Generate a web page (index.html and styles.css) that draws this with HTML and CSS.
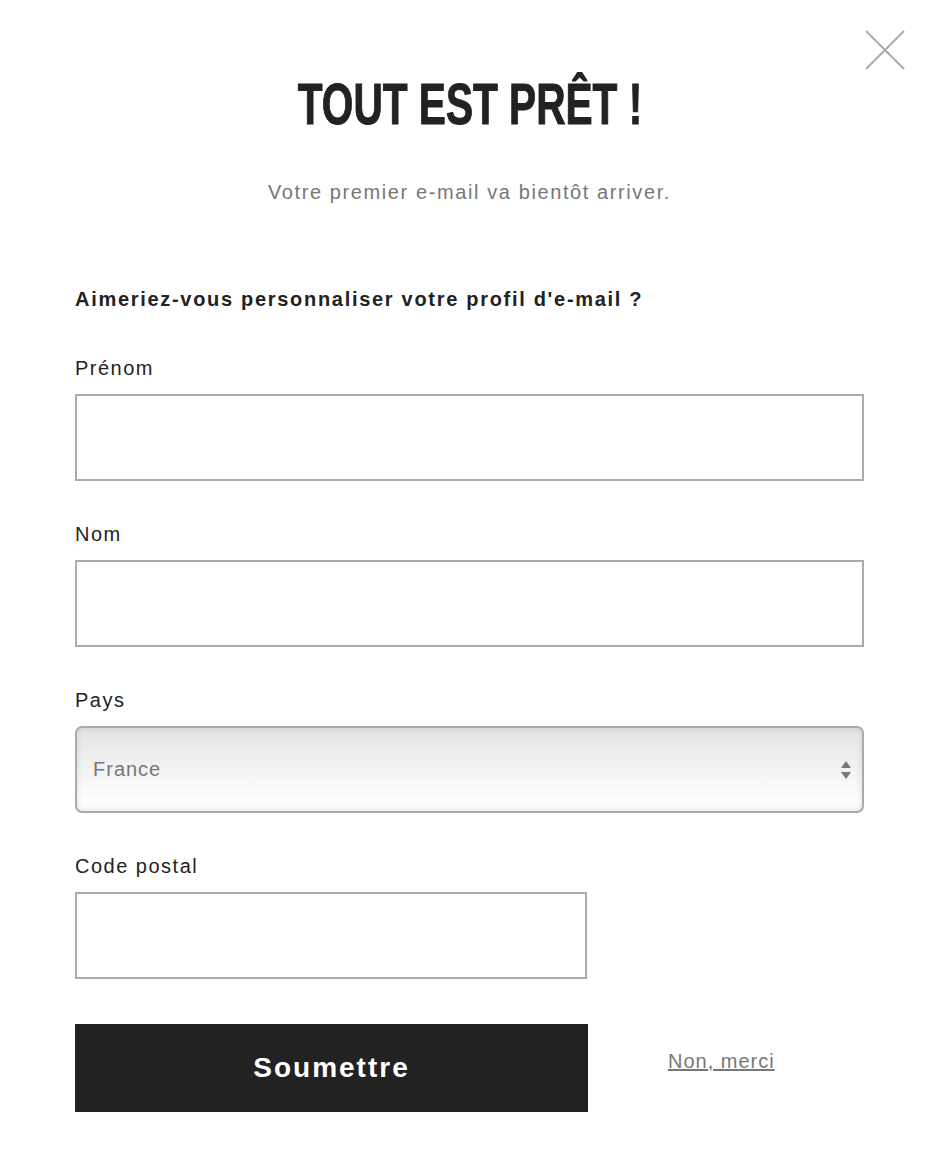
FILE: index.html
```html
<!DOCTYPE html>
<html>
<head>
  <title>Tout est prêt !</title>
  <link rel="stylesheet" href="styles.css">
</head>
<body>
  <div class="modal">
    <button class="close-btn" aria-label="Fermer">
      <svg width="40" height="40" viewBox="0 0 40 40">
        <path d="M1 1 L39 39 M39 1 L1 39" stroke="#ababab" stroke-width="2" fill="none" />
      </svg>
    </button>

    <h1 class="title"><span>TOUT EST PRÊT !</span></h1>
    <p class="subtitle">Votre premier e-mail va bientôt arriver.</p>

    <form id="profileForm">
      <h2 class="form-heading">Aimeriez-vous personnaliser votre profil d'e-mail ?</h2>

      <div class="field">
        <label for="firstName">Prénom</label>
        <input type="text" id="firstName" />
      </div>
      <div class="field">
        <label for="lastName">Nom</label>
        <input type="text" id="lastName" />
      </div>
      <div class="field">
        <label for="country">Pays</label>
        <div class="select-box">
          <span class="select-value">France</span>
          <span class="select-arrows">
            <svg width="12" height="20" viewBox="0 0 12 20">
              <path d="M6 1 L11 8 L1 8 Z M1 12 L11 12 L6 19 Z" fill="#777" />
            </svg>
          </span>
        </div>
      </div>
      <div class="field field-short">
        <label for="zip">Code postal</label>
        <input type="text" id="zip" />
      </div>

      <div class="actions">
        <button type="submit" class="submit-btn">Soumettre</button>
        <a href="#" class="skip-link">Non, merci</a>
      </div>
    </form>
  </div>
</body>
</html>
```

FILE: styles.css
```css
body {
  margin: 0;
  padding: 0;
  background: #fff;
  font-family: 'Liberation Sans', Arial, sans-serif;
  color: #222;
}
.modal {
  position: relative;
  width: 938px;
  box-sizing: border-box;
  padding: 71px 74px 40px 75px;
}
.close-btn {
  position: absolute;
  top: 30px;
  right: 33px;
  padding: 0;
  border: none;
  background: none;
  cursor: pointer;
  line-height: 0;
}
.title {
  margin: 0;
  font-family: 'Liberation Sans', Arial, sans-serif;
  font-weight: bold;
  font-size: 58px;
  line-height: 66px;
  text-align: center;
  color: #222;
}
.title span {
  display: inline-block;
  transform: scaleX(0.7);
  -webkit-text-stroke: 1px #222;
}
.subtitle {
  margin: 43px 0 0;
  font-size: 20px;
  line-height: 24px;
  letter-spacing: 1.6px;
  text-align: center;
  color: #777;
}
.form-heading {
  margin: 83px 0 0;
  font-size: 20px;
  line-height: 24px;
  letter-spacing: 1.7px;
  font-weight: bold;
  color: #222;
}
.field {
  margin-top: 45px;
}
.field + .field {
  margin-top: 41px;
}
.field label {
  display: block;
  font-size: 20px;
  line-height: 24px;
  letter-spacing: 1.5px;
  margin-bottom: 14px;
}
.field input {
  display: block;
  width: 100%;
  height: 87px;
  box-sizing: border-box;
  border: 2px solid #ababab;
  border-radius: 0;
  font-size: 20px;
  padding: 0 16px;
}
.field-short input {
  width: 512px;
}
.select-box {
  display: flex;
  align-items: center;
  justify-content: space-between;
  height: 87px;
  box-sizing: border-box;
  border: 2px solid #ababab;
  border-radius: 7px;
  padding: 0 10px 0 16px;
  background: linear-gradient(to bottom, #e4e4e4, #fdfdfd 85%);
  box-shadow: inset 0 0 6px rgba(0, 0, 0, 0.12);
}
.select-value {
  font-size: 20px;
  letter-spacing: 1px;
  color: #777;
}
.select-arrows {
  line-height: 0;
}
.actions {
  display: flex;
  align-items: center;
  margin-top: 45px;
}
.submit-btn {
  width: 513px;
  height: 88px;
  border: none;
  background: #222;
  color: #fff;
  font-family: 'Liberation Sans', Arial, sans-serif;
  font-weight: bold;
  font-size: 28px;
  letter-spacing: 2px;
  cursor: pointer;
}
.skip-link {
  margin-left: 80px;
  margin-top: -14px;
  font-size: 20px;
  letter-spacing: 1px;
  color: #777;
  text-decoration: underline;
}
```
